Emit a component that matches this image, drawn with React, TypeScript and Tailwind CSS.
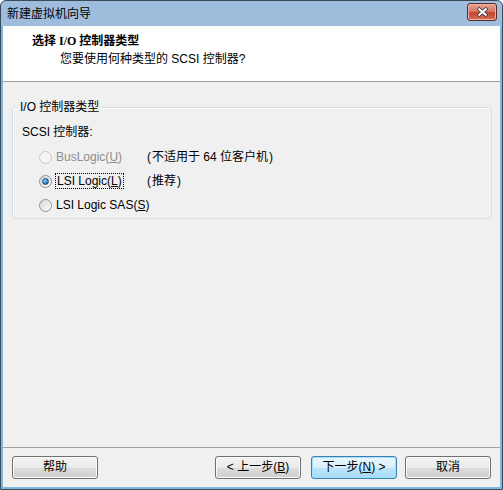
const ui = { fontFamily: '"Liberation Sans", "Noto Sans CJK SC", sans-serif' }

function Radio({ checked, disabled }: { checked?: boolean; disabled?: boolean }) {
  return (
    <span
      className={`flex h-[13px] w-[13px] shrink-0 items-center justify-center rounded-full border ${
        disabled ? 'border-[#c8c8c8] bg-[#f4f4f4]' : 'border-[#8e8f8f] bg-gradient-to-br from-[#d6d6d6] to-[#ffffff]'
      }`}
    >
      {checked && (
        <span className="h-[7px] w-[7px] rounded-full border border-[#1a507d] bg-[radial-gradient(circle_at_35%_35%,#9fd2f5_0%,#2b7fc0_60%,#0d4e86_100%)]" />
      )}
    </span>
  )
}

function Button({ label, primary, w = 'w-[86px]' }: { label: React.ReactNode; primary?: boolean; w?: string }) {
  return (
    <div
      className={`${w} flex h-[23px] items-center justify-center rounded-[3px] border text-[12px] text-black ${
        primary
          ? 'border-[#3c7fb1] bg-[linear-gradient(#eaf6fd_0%,#d9f0fc_50%,#bee6fd_50%,#a7d9f5_100%)] shadow-[inset_0_0_0_1px_#9fe0fb]'
          : 'border-[#707070] bg-[linear-gradient(#f2f2f2_0%,#ebebeb_50%,#dddddd_50%,#cfcfcf_100%)] shadow-[inset_0_0_0_1px_#fbfbfb]'
      }`}
    >
      {label}
    </div>
  )
}

// half-width parens, a bit wider than the Latin ones
const P = ({ c }: { c: string }) => <span className="inline-block w-[6px] text-center">{c}</span>

export default function App() {
  return (
    <div className="h-[490px] w-[503px] overflow-hidden bg-white" style={ui}>
      <div className="flex h-full w-full flex-col rounded-t-[6px] border border-[#3a4b5c] bg-[linear-gradient(#9ebcdc,#bcd4ec)]">
        {/* title bar */}
        <div className="flex h-[25px] shrink-0 items-center justify-between pl-[6px] pr-[5px]">
          <span className="text-[12px] text-black">新建虚拟机向导</span>
          <div className="mt-[-3px] flex h-[18px] w-[30px] items-center justify-center rounded-[3px] border border-[#5a2a24] bg-[linear-gradient(#e8a493_0%,#d47965_45%,#c2442c_55%,#d5715a_100%)] shadow-[inset_0_0_0_1px_#eeb3a6]">
            <svg width="11" height="10" viewBox="0 0 11 10">
              <path d="M1 1 L10 9 M10 1 L1 9" stroke="#3a3a3a" strokeWidth="3.4" />
              <path d="M1.5 1.5 L9.5 8.5 M9.5 1.5 L1.5 8.5" stroke="#ffffff" strokeWidth="2" />
            </svg>
          </div>
        </div>

        {/* client area */}
        <div className="flex flex-1 flex-col border-x-2 border-b-2 border-[#7eb6de] bg-[#f0f0f0]">
          <div className="flex h-[56px] flex-col border-b border-[#a0a0a0] bg-white pl-[29px] pt-[7px]">
            <span className="text-[12px] font-bold leading-[16px] text-black" style={{ fontFamily: '"Liberation Serif", "Noto Sans CJK SC", serif' }}>
              选择 I/O 控制器类型
            </span>
            <span className="pl-[28px] pt-[2px] text-[12px] leading-[16px] text-black">您要使用何种类型的 SCSI 控制器?</span>
          </div>

          <div className="flex flex-1 flex-col px-[9px] pt-[25px]">
            <div className="relative h-[112px] w-[480px] rounded-[3px] border border-[#d5dfe5] shadow-[inset_1px_1px_0_#ffffff]">
              <span className="absolute left-[5px] top-[-9px] bg-[#f0f0f0] px-[2px] text-[12px] leading-[16px] text-black">I/O 控制器类型</span>
              <div className="flex flex-col pl-[9px] pt-[16px] text-[12px] leading-[16px] text-black">
                <span>SCSI 控制器:</span>
                <div className="flex flex-col gap-[8px] pl-[17px] pt-[9px]">
                  <div className="flex items-center">
                    <Radio disabled />
                    <span className="ml-[3px] w-[91px] px-[1px] text-[#8d8d8d]">
                      BusLogic(<span className="underline">U</span>)
                    </span>
                    <span>
                      <P c="(" />不适用于 64 位客户机<P c=")" />
                    </span>
                  </div>
                  <div className="flex items-center">
                    <Radio checked />
                    <span className="ml-[3px] w-[91px]">
                      <span className="border border-dotted border-black px-[1px]">
                        LSI Logic(<span className="underline">L</span>)
                      </span>
                    </span>
                    <span>
                      <P c="(" />推荐<P c=")" />
                    </span>
                  </div>
                  <div className="flex items-center">
                    <Radio />
                    <span className="ml-[3px] px-[1px]">
                      LSI Logic SAS(<span className="underline">S</span>)
                    </span>
                  </div>
                </div>
              </div>
            </div>
          </div>

          <div className="border-t border-[#a0a0a0] shadow-[inset_0_1px_0_#ffffff]" />
          <div className="flex h-[39px] items-center px-[9px] pb-[1px]">
            <Button label="帮助" />
            <div className="flex-1" />
            <Button label={<>&lt; 上一步(<span className="underline">B</span>)</>} />
            <div className="w-[10px]" />
            <Button primary label={<>下一步(<span className="underline">N</span>) &gt;</>} />
            <div className="w-[8px]" />
            <Button label="取消" />
          </div>
        </div>
      </div>
    </div>
  )
}
